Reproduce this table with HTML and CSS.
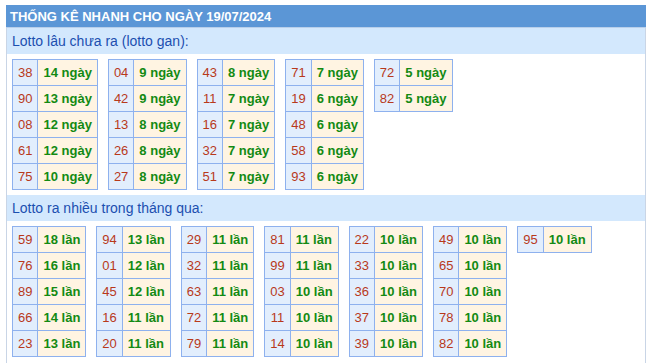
FILE: index.html
```html
<!DOCTYPE html>
<html lang="vi">
<head>
<meta charset="utf-8">
<title>Thống kê nhanh</title>
<link rel="stylesheet" href="styles.css">
</head>
<body>
<div class="box">
  <div class="box-title">THỐNG KÊ NHANH CHO NGÀY 19/07/2024</div>
  <div class="box-body">
    <div class="sub">Lotto lâu chưa ra (lotto gan):</div>
    <div class="tables">
      <table class="lt"><tr><td class="n">38</td><td class="v">14 ngày</td></tr><tr><td class="n">90</td><td class="v">13 ngày</td></tr><tr><td class="n">08</td><td class="v">12 ngày</td></tr><tr><td class="n">61</td><td class="v">12 ngày</td></tr><tr><td class="n">75</td><td class="v">10 ngày</td></tr></table>
      <table class="lt"><tr><td class="n">04</td><td class="v">9 ngày</td></tr><tr><td class="n">42</td><td class="v">9 ngày</td></tr><tr><td class="n">13</td><td class="v">8 ngày</td></tr><tr><td class="n">26</td><td class="v">8 ngày</td></tr><tr><td class="n">27</td><td class="v">8 ngày</td></tr></table>
      <table class="lt"><tr><td class="n">43</td><td class="v">8 ngày</td></tr><tr><td class="n">11</td><td class="v">7 ngày</td></tr><tr><td class="n">16</td><td class="v">7 ngày</td></tr><tr><td class="n">32</td><td class="v">7 ngày</td></tr><tr><td class="n">51</td><td class="v">7 ngày</td></tr></table>
      <table class="lt"><tr><td class="n">71</td><td class="v">7 ngày</td></tr><tr><td class="n">19</td><td class="v">6 ngày</td></tr><tr><td class="n">48</td><td class="v">6 ngày</td></tr><tr><td class="n">58</td><td class="v">6 ngày</td></tr><tr><td class="n">93</td><td class="v">6 ngày</td></tr></table>
      <table class="lt"><tr><td class="n">72</td><td class="v">5 ngày</td></tr><tr><td class="n">82</td><td class="v">5 ngày</td></tr></table>
    </div>
    <div class="sub">Lotto ra nhiều trong tháng qua:</div>
    <div class="tables">
      <table class="lt"><tr><td class="n">59</td><td class="v">18 lần</td></tr><tr><td class="n">76</td><td class="v">16 lần</td></tr><tr><td class="n">89</td><td class="v">15 lần</td></tr><tr><td class="n">66</td><td class="v">14 lần</td></tr><tr><td class="n">23</td><td class="v">13 lần</td></tr></table>
      <table class="lt"><tr><td class="n">94</td><td class="v">13 lần</td></tr><tr><td class="n">01</td><td class="v">12 lần</td></tr><tr><td class="n">45</td><td class="v">12 lần</td></tr><tr><td class="n">16</td><td class="v">11 lần</td></tr><tr><td class="n">20</td><td class="v">11 lần</td></tr></table>
      <table class="lt"><tr><td class="n">29</td><td class="v">11 lần</td></tr><tr><td class="n">32</td><td class="v">11 lần</td></tr><tr><td class="n">63</td><td class="v">11 lần</td></tr><tr><td class="n">72</td><td class="v">11 lần</td></tr><tr><td class="n">79</td><td class="v">11 lần</td></tr></table>
      <table class="lt"><tr><td class="n">81</td><td class="v">11 lần</td></tr><tr><td class="n">99</td><td class="v">11 lần</td></tr><tr><td class="n">03</td><td class="v">10 lần</td></tr><tr><td class="n">11</td><td class="v">10 lần</td></tr><tr><td class="n">14</td><td class="v">10 lần</td></tr></table>
      <table class="lt"><tr><td class="n">22</td><td class="v">10 lần</td></tr><tr><td class="n">33</td><td class="v">10 lần</td></tr><tr><td class="n">36</td><td class="v">10 lần</td></tr><tr><td class="n">37</td><td class="v">10 lần</td></tr><tr><td class="n">39</td><td class="v">10 lần</td></tr></table>
      <table class="lt"><tr><td class="n">49</td><td class="v">10 lần</td></tr><tr><td class="n">65</td><td class="v">10 lần</td></tr><tr><td class="n">70</td><td class="v">10 lần</td></tr><tr><td class="n">78</td><td class="v">10 lần</td></tr><tr><td class="n">82</td><td class="v">10 lần</td></tr></table>
      <table class="lt"><tr><td class="n">95</td><td class="v">10 lần</td></tr></table>
    </div>
  </div>
</div>
</body>
</html>
```

FILE: styles.css
```css
html, body {
  margin: 0;
  padding: 0;
  background: #ffffff;
  font-family: "Liberation Sans", Arial, sans-serif;
}
.box {
  margin: 5px 6px 0 6px;
  width: 640px;
}
.box-title {
  height: 23px;
  line-height: 23px;
  background: #5b96d6;
  color: #ffffff;
  font-size: 13px;
  font-weight: bold;
  padding-left: 4px;
  border-bottom: 1px solid #b9cfea;
  box-sizing: border-box;
}
.box-body {
  border-left: 1px solid #c9d5e6;
  border-right: 1px solid #c9d5e6;
  padding-bottom: 10px;
}
.sub {
  height: 26px;
  line-height: 26px;
  background: #d3e8fd;
  color: #1c4fb0;
  font-size: 14px;
  padding-left: 5px;
}
.tables {
  display: flex;
  flex-wrap: wrap;
  align-items: flex-start;
  gap: 10px;
  padding: 5px 5px;
}
.lt {
  border-collapse: collapse;
  font-size: 13px;
}
.lt td {
  border: 1px solid #8eb1ee;
  height: 25px;
  line-height: 25px;
  padding: 0 5px;
  white-space: nowrap;
}
.lt td.n {
  background: #e2eefd;
  color: #b8391b;
  text-align: center;
}
.lt td.v {
  background: #fff4e2;
  color: #138a13;
  font-weight: bold;
}
```
